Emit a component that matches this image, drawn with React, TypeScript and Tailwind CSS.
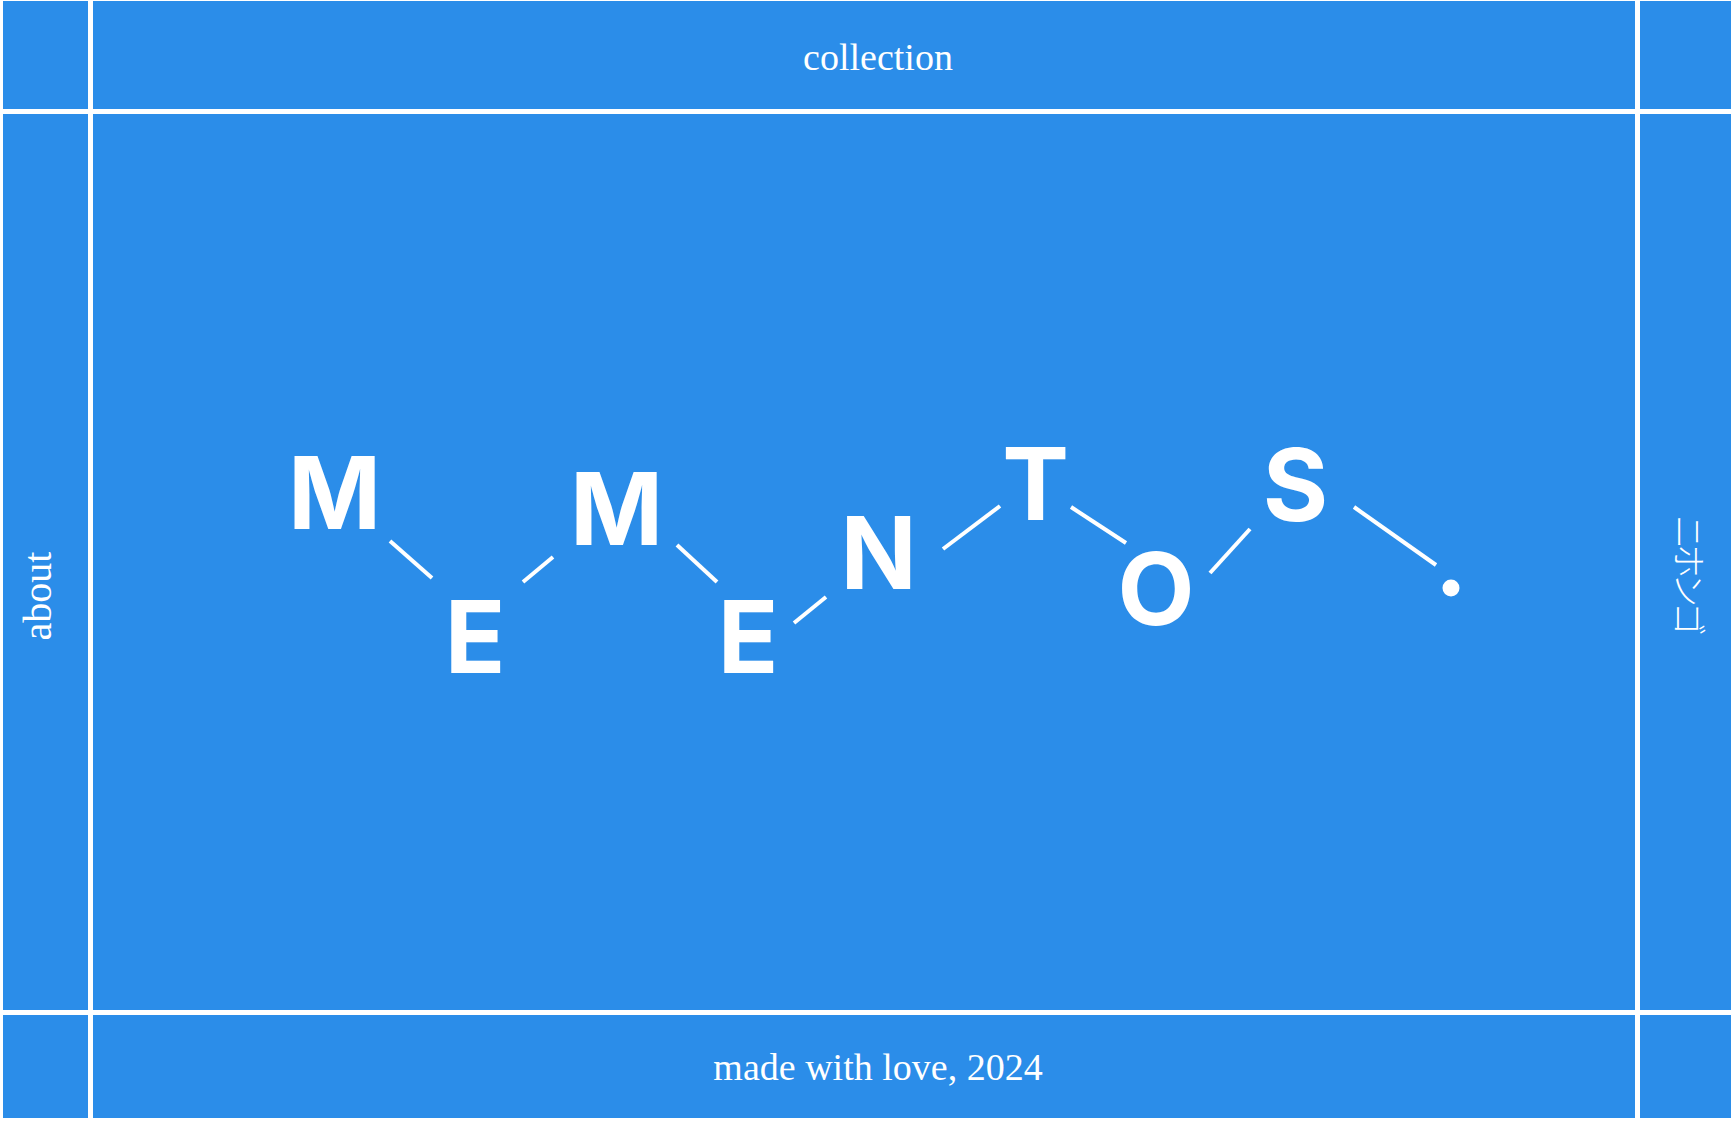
import React from "react";

const serif = "font-['Liberation_Serif',_'Times_New_Roman',_serif]";

function Logo() {
  const letter =
    "absolute leading-none text-[100px] font-bold text-white -translate-x-1/2 font-['Inter',_'Liberation_Sans',_sans-serif]";
  return (
    <div className="relative w-full h-full">
      <svg
        className="absolute inset-0"
        width="1542"
        height="896"
        viewBox="0 0 1542 896"
        fill="none"
      >
        <g stroke="#ffffff" strokeWidth="4" strokeLinecap="butt">
          <line x1="297" y1="427" x2="339" y2="464" />
          <line x1="430" y1="468" x2="460" y2="443" />
          <line x1="584" y1="431" x2="624" y2="468" />
          <line x1="701" y1="509" x2="733" y2="483" />
          <line x1="850" y1="435" x2="907" y2="392" />
          <line x1="978" y1="393" x2="1033" y2="429" />
          <line x1="1117" y1="459" x2="1157" y2="415" />
          <line x1="1261" y1="393" x2="1343" y2="451" />
        </g>
        <circle cx="1358" cy="474" r="8.5" fill="#ffffff" />
      </svg>
      <span className={`${letter} left-[241.5px] top-[328.6px]`}>M</span>
      <span className={`${letter} left-[382px] top-[472.6px]`}>E</span>
      <span className={`${letter} left-[523.5px] top-[344.6px]`}>M</span>
      <span className={`${letter} left-[655px] top-[472.6px]`}>E</span>
      <span className={`${letter} left-[785.5px] top-[388.6px]`}>N</span>
      <span className={`${letter} left-[942.5px] top-[319.6px]`}>T</span>
      <span className={`${letter} left-[1063px] top-[424.6px]`}>O</span>
      <span className={`${letter} left-[1202.5px] top-[321.1px]`}>S</span>
    </div>
  );
}

export default function App() {
  const cell = "bg-[#2b8de9] text-white";
  return (
    <div className="w-[1731px] h-[1126px] bg-white pl-[3px] pt-[1px] overflow-hidden">
      <div className="grid grid-cols-[85px_1542px_91px] grid-rows-[108px_896px_103px] gap-[5px]">
        {/* top row */}
        <div className={cell} />
        <div className={`${cell} flex items-center justify-center`}>
          <a
            href="#"
            className={`${serif} text-[38px] leading-none text-white translate-x-[14px] translate-y-[2px]`}
          >
            collection
          </a>
        </div>
        <div className={cell} />

        {/* middle row */}
        <div className={`${cell} flex items-center justify-center`}>
          <a
            href="#"
            className={`${serif} inline-block whitespace-nowrap text-[40px] leading-none text-white -rotate-90 -translate-x-[7px] translate-y-[34px]`}
          >
            about
          </a>
        </div>
        <div className={cell}>
          <Logo />
        </div>
        <div className={`${cell} flex items-center justify-center`}>
          <a
            href="#"
            className="inline-block whitespace-nowrap text-[34px] tracking-[-5px] leading-none text-white rotate-90 translate-x-[4px] translate-y-[11px] font-['Noto_Sans_CJK_JP',_sans-serif] font-light"
          >
            ニホンゴ
          </a>
        </div>

        {/* bottom row */}
        <div className={cell} />
        <div className={`${cell} flex items-center justify-center`}>
          <span
            className={`${serif} text-[38px] leading-none text-white translate-x-[14px]`}
          >
            made with love, 2024
          </span>
        </div>
        <div className={cell} />
      </div>
    </div>
  );
}
